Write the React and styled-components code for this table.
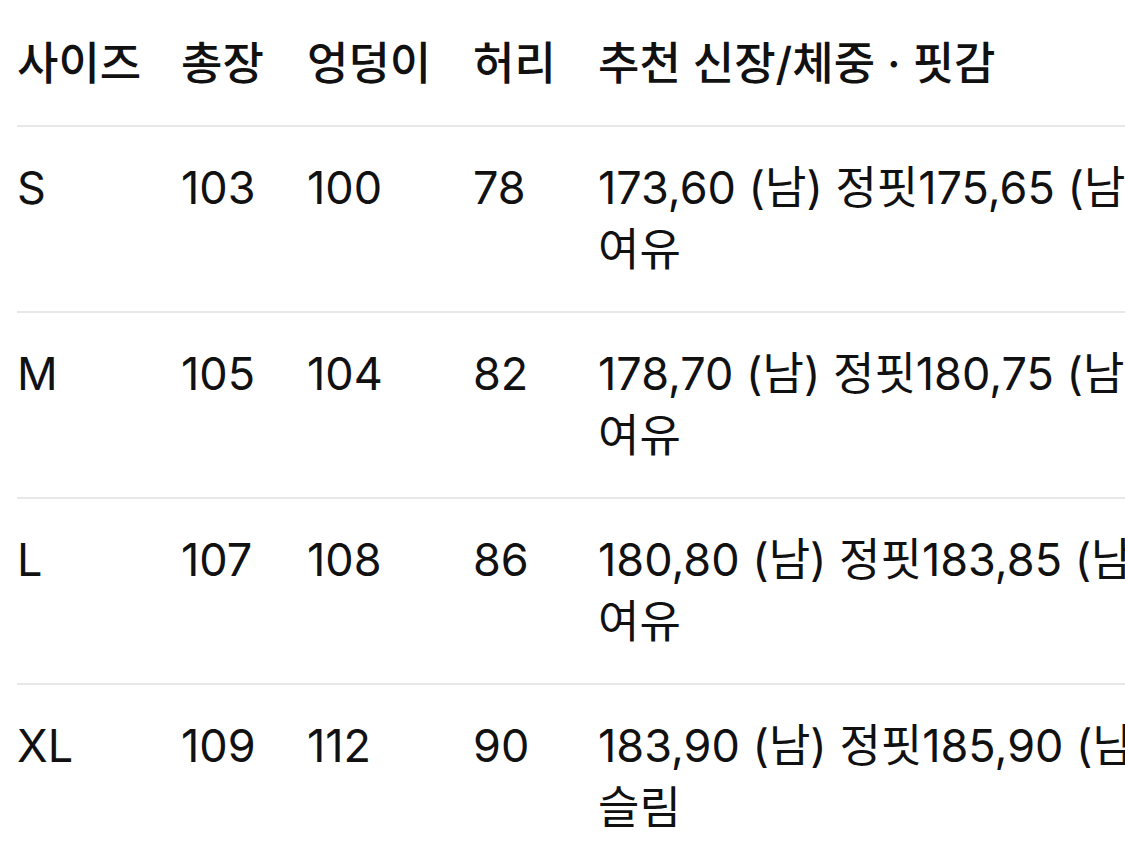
import React from 'react';
import styled, { createGlobalStyle } from 'styled-components';

const GlobalStyle = createGlobalStyle`
  html, body {
    margin: 0;
    padding: 0;
    background: #fff;
    overflow: hidden;
  }
  body {
    font-family: Inter, "Noto Sans CJK KR", sans-serif;
    color: #111;
  }
`;

const Page = styled.div`
  padding: 3px 0 0 17px;
  width: 1300px;
`;

const Table = styled.table`
  border-collapse: collapse;
  table-layout: fixed;
  width: 1191px;
  font-size: 45px;
  line-height: 62px;
`;

const Row = styled.tr`
  border-bottom: 2px solid #e8e8e8;
`;

const HeadCell = styled.th`
  text-align: left;
  vertical-align: top;
  font-weight: 500;
  padding: 30px 40px 30px 0;
  white-space: nowrap;
`;

const Cell = styled.td`
  text-align: left;
  vertical-align: top;
  font-weight: 400;
  padding: 30px 40px 30px 0;
`;

const columns = [164, 126, 166, 125, 610];

const sizes = [
  ['S', '103', '100', '78', '173,60 (남) 정핏175,65 (남) 여유'],
  ['M', '105', '104', '82', '178,70 (남) 정핏180,75 (남) 여유'],
  ['L', '107', '108', '86', '180,80 (남) 정핏183,85 (남) 여유'],
  ['XL', '109', '112', '90', '183,90 (남) 정핏185,90 (남) 슬림'],
];

const headers = ['사이즈', '총장', '엉덩이', '허리', '추천 신장/체중 · 핏감'];

export default function App() {
  return (
    <>
      <GlobalStyle />
      <Page>
        <Table>
          <colgroup>
            {columns.map((w, i) => (
              <col key={i} style={{ width: w }} />
            ))}
          </colgroup>
          <thead>
            <Row>
              {headers.map((h) => (
                <HeadCell key={h}>{h}</HeadCell>
              ))}
            </Row>
          </thead>
          <tbody>
            {sizes.map((row) => (
              <Row key={row[0]}>
                {row.map((v, i) => (
                  <Cell key={i}>{v}</Cell>
                ))}
              </Row>
            ))}
          </tbody>
        </Table>
      </Page>
    </>
  );
}
